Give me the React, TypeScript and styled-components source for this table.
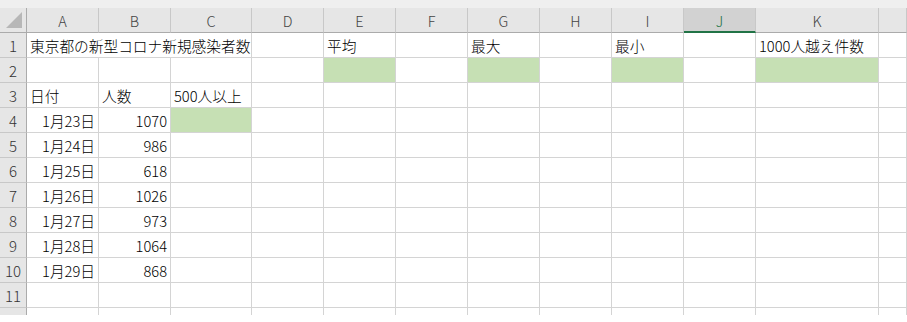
import React from 'react';
import styled, {createGlobalStyle} from 'styled-components';

type Align = 'left' | 'right';

interface ICell {
    text?: string;
    align?: Align;
    fill?: boolean;
    span?: number;
}

const COLUMNS = [
    {name: 'A', width: 72},
    {name: 'B', width: 72},
    {name: 'C', width: 81},
    {name: 'D', width: 72},
    {name: 'E', width: 72},
    {name: 'F', width: 72},
    {name: 'G', width: 72},
    {name: 'H', width: 72},
    {name: 'I', width: 72},
    {name: 'J', width: 72},
    {name: 'K', width: 123},
    {name: '', width: 0},
];

const SELECTED_COLUMN = 'J';

const cases: [string, number][] = [
    ['1月23日', 1070],
    ['1月24日', 986],
    ['1月25日', 618],
    ['1月26日', 1026],
    ['1月27日', 973],
    ['1月28日', 1064],
    ['1月29日', 868],
];

const rows: Record<string, ICell>[] = [
    {
        A: {text: '東京都の新型コロナ新規感染者数', span: 3},
        E: {text: '平均'},
        G: {text: '最大'},
        I: {text: '最小'},
        K: {text: '1000人越え件数'},
    },
    {E: {fill: true}, G: {fill: true}, I: {fill: true}, K: {fill: true}},
    {A: {text: '日付'}, B: {text: '人数'}, C: {text: '500人以上'}},
    ...cases.map(([date, count], i) => {
        const row: Record<string, ICell> = {
            A: {text: date, align: 'right'},
            B: {text: String(count), align: 'right'},
        };
        if (i === 0) row.C = {fill: true};
        return row;
    }),
    {},
    {},
];

const template = `27px ${COLUMNS.map(c => (c.width ? `${c.width}px` : '1fr')).join(' ')}`;

const App = () => {
    return (
        <>
            <GlobalStyle/>
            <Sheet>
                <TopStrip/>
                <Row>
                    <Corner>
                        <svg width="16" height="16" viewBox="0 0 16 16">
                            <polygon points="16,0 16,16 0,16" fill="#b7b7b7"/>
                        </svg>
                    </Corner>
                    {COLUMNS.map((c, i) => (
                        <ColHeader key={i} $selected={c.name === SELECTED_COLUMN}>{c.name}</ColHeader>
                    ))}
                </Row>
                {rows.map((row, r) => {
                    const cells: React.ReactNode[] = [];
                    let skip = 0;
                    COLUMNS.forEach((c, i) => {
                        if (skip > 0) {
                            skip--;
                            return;
                        }
                        const cell = row[c.name] || {};
                        const span = cell.span || 1;
                        skip = span - 1;
                        cells.push(
                            <Cell key={i} $align={cell.align || 'left'} $fill={!!cell.fill} $span={span}>
                                {cell.text}
                            </Cell>
                        );
                    });
                    return (
                        <Row key={r}>
                            <RowHeader>{r + 1}</RowHeader>
                            {cells}
                        </Row>
                    );
                })}
            </Sheet>
        </>
    )
}

const GlobalStyle = createGlobalStyle`
  html, body {
    margin: 0;
    padding: 0;
    background: #ffffff;
  }

  body {
    font-family: "Noto Sans CJK JP", "Noto Sans", sans-serif;
    font-weight: 300;
    color: #000000;
  }
`;

const Sheet = styled.div`
  width: 907px;
  height: 315px;
  overflow: hidden;
  background: #ffffff;
`;

const TopStrip = styled.div`
  height: 8px;
  background: #efefef;
`;

const Row = styled.div`
  display: grid;
  grid-template-columns: ${template};
  height: 25px;
`;

const HeaderBase = styled.div`
  box-sizing: border-box;
  display: flex;
  align-items: center;
  justify-content: center;
  background: #e6e6e6;
  color: #444444;
  font-size: 14.5px;
  overflow: hidden;
`;

const Corner = styled(HeaderBase)`
  justify-content: flex-end;
  align-items: flex-end;
  padding: 0 4px 4px 0;
  border-right: 1px solid #ababab;
  border-bottom: 1px solid #ababab;
`;

const ColHeader = styled(HeaderBase)<{ $selected: boolean }>`
  border-right: 1px solid #c8c8c8;
  border-bottom: ${p => (p.$selected ? '2px solid #217346' : '1px solid #ababab')};
  background: ${p => (p.$selected ? '#d2d2d2' : '#e6e6e6')};
  color: ${p => (p.$selected ? '#217346' : '#444444')};
  padding-top: ${p => (p.$selected ? '1px' : '0')};
`;

const RowHeader = styled(HeaderBase)`
  border-right: 1px solid #ababab;
  border-bottom: 1px solid #c8c8c8;
  font-size: 15px;
  color: #333333;
`;

const Cell = styled.div<{ $align: Align; $fill: boolean; $span: number }>`
  box-sizing: border-box;
  grid-column: span ${p => p.$span};
  display: flex;
  align-items: center;
  justify-content: ${p => (p.$align === 'right' ? 'flex-end' : 'flex-start')};
  padding: 0 3px;
  border-right: 1px solid #d4d4d4;
  border-bottom: 1px solid #d4d4d4;
  background: ${p => (p.$fill ? '#c6e0b4' : 'transparent')};
  font-size: 14.7px;
  white-space: nowrap;
  overflow: visible;
`;

export default App;
